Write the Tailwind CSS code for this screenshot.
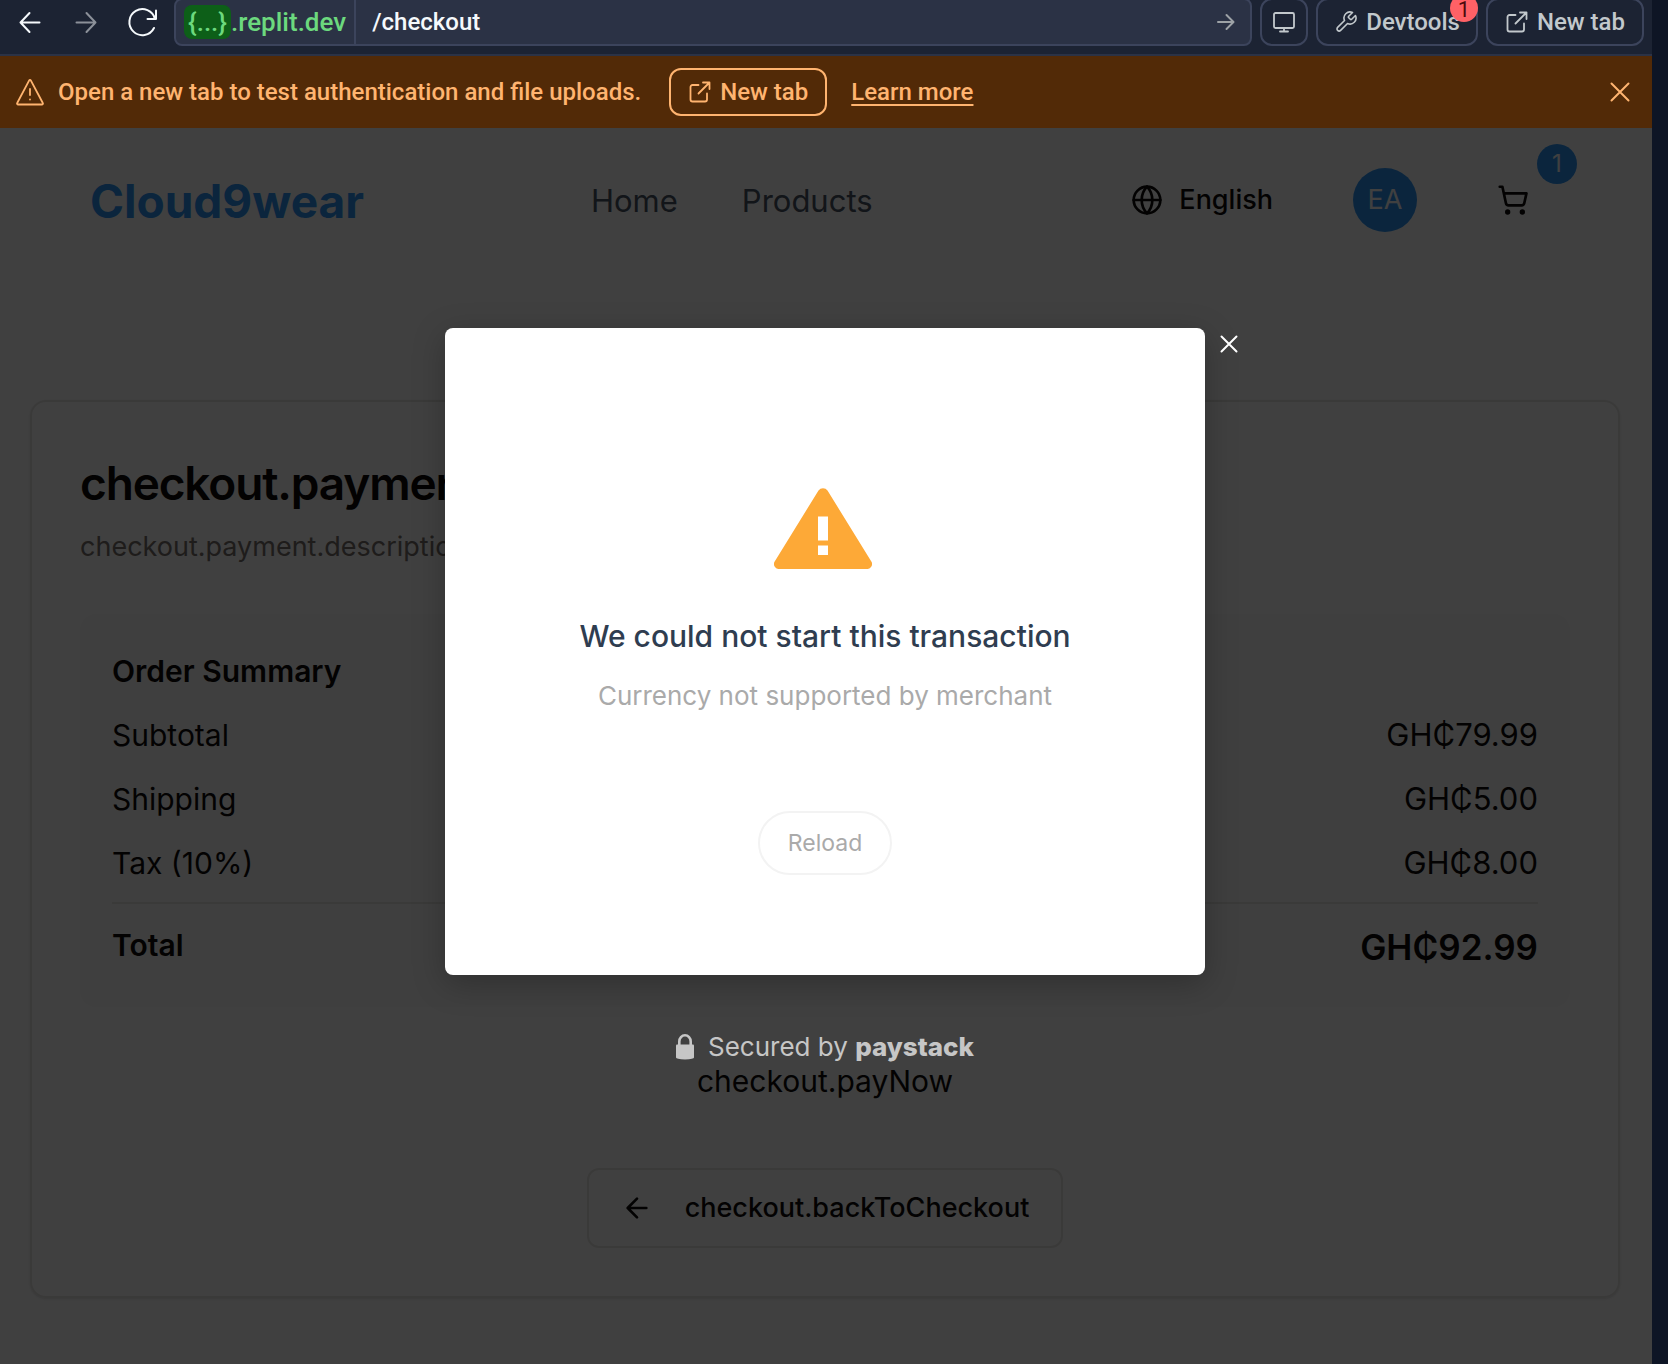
<!DOCTYPE html>
<html lang="en">
<head>
<meta charset="utf-8">
<meta name="viewport" content="width=device-width, initial-scale=1">
<title>Cloud9wear checkout</title>
<script src="https://cdn.jsdelivr.net/npm/@tailwindcss/browser@4"></script>
</head>
<body class="flex min-h-screen flex-col bg-[#0e1525] pr-4 font-['Inter',sans-serif]">

  <!-- Preview toolbar -->
  <div class="border-b-2 border-[#2b3245] bg-[#1c2333] pb-2 font-['Roboto',sans-serif] text-2xl font-medium text-[#c2c8cc]">
    <div class="-mt-0.5 flex h-12 items-stretch gap-2 pr-2 pl-0.5">
      <div class="-mr-1 flex">
        <button type="button" aria-label="Back" class="flex w-14 items-center justify-center text-[#f5f9fc]">
          <svg class="size-7" viewBox="0 0 28 28" fill="none" stroke="currentColor" stroke-width="2" stroke-linecap="round" stroke-linejoin="round"><path d="M23.500 14.500H4.500M13.500 5L4.500 14.500l9 9.500"/></svg>
        </button>
        <button type="button" aria-label="Forward" class="flex w-14 items-center justify-center text-[#8b9099]">
          <svg class="size-7" viewBox="0 0 28 28" fill="none" stroke="currentColor" stroke-width="2" stroke-linecap="round" stroke-linejoin="round"><path d="M4.500 14.500H23.500M14.500 5l9 9.500-9 9.500"/></svg>
        </button>
        <button type="button" aria-label="Refresh" class="flex w-14 items-center justify-center text-[#f5f9fc]">
          <svg class="size-8" viewBox="0 0 32 32" fill="none" stroke="currentColor" stroke-width="2" stroke-linecap="round" stroke-linejoin="round"><path d="M30 4.500v8.500H21.500M29 13A13 13 0 1 0 28 22"/></svg>
        </button>
      </div>
      <div class="flex min-w-0 flex-1 items-stretch rounded-lg border-2 border-[#3c445c] bg-[#2b3245]">
        <span class="flex items-center border-r-2 border-[#3c445c] px-2 text-[26px] text-[#6cd97e]"><span class="rounded-lg bg-[#0d5f18] px-1 leading-[34px]">{...}</span>.replit.dev</span>
        <input type="text" aria-label="Path" value="/checkout" class="min-w-0 flex-1 bg-transparent px-4 text-[#f5f9fc] outline-none">
        <button type="button" aria-label="Go" class="flex w-12 items-center justify-center text-[#9da2a6]">
          <svg class="size-5" viewBox="0 0 20 20" fill="none" stroke="currentColor" stroke-width="2" stroke-linecap="round" stroke-linejoin="round"><path d="M2 10h15M10.500 3l7 7-7 7"/></svg>
        </button>
      </div>
      <button type="button" aria-label="Device size" class="flex w-12 items-center justify-center rounded-xl border-2 border-[#3c445c]">
        <svg class="size-6" viewBox="0 0 24 24" fill="none" stroke="currentColor" stroke-width="1.800" stroke-linecap="round" stroke-linejoin="round"><rect x="2" y="3" width="20" height="15" rx="1.500"/><path d="M12 18v3.500M8 21.500h8"/></svg>
      </button>
      <button type="button" class="relative flex items-center gap-2 rounded-xl border-2 border-[#3c445c] px-4">
        <svg class="size-6" viewBox="0 0 24 24" fill="none" stroke="currentColor" stroke-width="1.600" stroke-linecap="round" stroke-linejoin="round"><path d="M14.700 6.300a1 1 0 0 0 0 1.400l1.600 1.600a1 1 0 0 0 1.400 0l3.770-3.770a6 6 0 0 1-7.940 7.940l-6.910 6.910a2.120 2.120 0 0 1-3-3l6.910-6.910a6 6 0 0 1 7.940-7.940z"/></svg>
        Devtools
        <span class="absolute -top-1.5 -right-0.5 flex size-7 items-center justify-center rounded-full bg-[#ff6166] pt-1 text-[22px] leading-5 font-normal text-[#4d0a0c]">1</span>
      </button>
      <button type="button" class="flex items-center gap-2 rounded-xl border-2 border-[#3c445c] px-[17px]">
        <svg class="size-6" viewBox="0 0 24 24" fill="none" stroke="currentColor" stroke-width="1.800" stroke-linecap="round" stroke-linejoin="round"><path d="M10.500 5H4.500A2 2 0 0 0 2.500 7v12.500a2 2 0 0 0 2 2H17a2 2 0 0 0 2-2V13.500M15 2.500h6.500V9M21.500 2.500L10.500 13.500"/></svg>
        New tab
      </button>
    </div>
  </div>

  <!-- Preview notice -->
  <div class="flex h-18 items-center bg-[#522a07] px-4 font-['Roboto',sans-serif] text-2xl font-medium text-[#ffb470]">
    <svg class="mr-3.5 size-7 shrink-0" viewBox="0 0 28 28" fill="none" stroke="currentColor" stroke-width="1.800" stroke-linecap="round" stroke-linejoin="round"><path d="M13.200 2.300L1.200 25a1 1 0 0 0 .9 1.500h23.800a1 1 0 0 0 .9-1.500L14.800 2.300a.9.900 0 0 0-1.600 0zM14 11v6M14 21.500v.1"/></svg>
    <p>Open a new tab to test authentication and file uploads.</p>
    <button type="button" class="ml-7 flex h-12 items-center gap-2 rounded-xl border-2 border-[#ffb470] px-[17px]">
      <svg class="size-6" viewBox="0 0 24 24" fill="none" stroke="currentColor" stroke-width="1.800" stroke-linecap="round" stroke-linejoin="round"><path d="M10.500 5H4.500A2 2 0 0 0 2.500 7v12.500a2 2 0 0 0 2 2H17a2 2 0 0 0 2-2V13.500M15 2.500h6.500V9M21.500 2.500L10.500 13.500"/></svg>
      New tab
    </button>
    <a href="#" class="ml-6 underline decoration-2 underline-offset-4">Learn more</a>
    <button type="button" aria-label="Dismiss" class="ml-auto flex size-8 items-center justify-center">
      <svg class="size-5" viewBox="0 0 20 20" fill="none" stroke="currentColor" stroke-width="2" stroke-linecap="round"><path d="M1.500 1.500l17 17M18.500 1.500l-17 17"/></svg>
    </button>
  </div>

  <!-- Store page -->
  <div class="relative flex-1 bg-white text-stone-950">
    <header class="flex h-36 items-center pr-[99px] pl-[90px]">
      <a href="#" class="pt-0.5 text-[46px] font-bold text-[#2c94f4]">Cloud9wear</a>
      <nav class="ml-[227px] flex gap-16 pt-0.5 text-[31px] text-gray-600">
        <a href="#">Home</a>
        <a href="#">Products</a>
      </nav>
      <div class="ml-auto flex items-center">
        <button type="button" class="flex items-center gap-4 text-[27px] font-medium">
          <svg class="size-8" viewBox="0 0 24 24" fill="none" stroke="currentColor" stroke-width="2" stroke-linecap="round" stroke-linejoin="round"><circle cx="12" cy="12" r="10"/><path d="M12 2a14.500 14.500 0 0 0 0 20 14.500 14.500 0 0 0 0-20M2 12h20"/></svg>
          English
        </button>
        <button type="button" aria-label="Account" class="ml-20 flex size-16 items-center justify-center rounded-full bg-[#2c94f4] text-[27px] text-white">EA</button>
        <button type="button" aria-label="Cart" class="relative ml-14 flex size-20 items-center justify-center">
          <svg class="size-8" viewBox="0 0 24 24" fill="none" stroke="currentColor" stroke-width="2" stroke-linecap="round" stroke-linejoin="round"><circle cx="8" cy="21" r="1"/><circle cx="19" cy="21" r="1"/><path d="M2.050 2.050h2l2.660 12.420a2 2 0 0 0 2 1.580h9.780a2 2 0 0 0 1.950-1.570l1.650-7.430H5.120"/></svg>
          <span class="absolute -top-4 -right-6 flex size-10 items-center justify-center rounded-full bg-[#2c94f4] text-2xl text-white">1</span>
        </button>
      </div>
    </header>

    <main class="pt-32 pr-8 pb-16 pl-[30px]">
      <section class="rounded-2xl border-2 border-stone-200 px-12 pt-[53px] pb-12 shadow-sm">
        <h1 class="text-[46px] leading-14 font-semibold tracking-tight">checkout.payment.title</h1>
        <p class="mt-4 text-[27px] leading-10 text-stone-500">checkout.payment.description</p>

        <div class="mt-[47px] rounded-2xl bg-[#fbfbfa] px-8 pt-[33px] pb-[34px] text-[30px] leading-12">
          <h2 class="font-semibold">Order Summary</h2>
          <dl>
            <div class="mt-4 flex justify-between"><dt>Subtotal</dt><dd class="text-[31px]">GH₵79.99</dd></div>
            <div class="mt-4 flex justify-between"><dt>Shipping</dt><dd class="text-[31px]">GH₵5.00</dd></div>
            <div class="mt-4 flex justify-between"><dt>Tax (10%)</dt><dd class="text-[31px]">GH₵8.00</dd></div>
            <div class="mt-[15px] flex justify-between border-t-2 border-stone-200 pt-[17px] font-semibold"><dt>Total</dt><dd class="text-[35px] leading-13">GH₵92.99</dd></div>
          </dl>
        </div>

        <button type="button" class="mx-auto mt-[50px] block text-[30px] leading-12">checkout.payNow</button>
        <button type="button" class="mx-auto mt-[63px] flex h-20 items-center gap-8 rounded-xl border-2 border-stone-200 px-8 text-[27px] font-medium">
          <svg class="size-8" viewBox="0 0 24 24" fill="none" stroke="currentColor" stroke-width="2" stroke-linecap="round" stroke-linejoin="round"><path d="M12 19l-7-7 7-7M19 12H5"/></svg>
          checkout.backToCheckout
        </button>
      </section>
    </main>

    <!-- Payment dialog over the dimmed page -->
    <div class="absolute inset-0 flex flex-col items-center bg-black/75 pt-50 pr-0.5">
      <div role="dialog" aria-modal="true" aria-labelledby="dialog-title" class="relative flex w-[760px] flex-col items-center rounded-lg bg-white pt-40 pb-25 text-center shadow-[0_8px_32px_rgba(0,0,0,0.25)]">
        <button type="button" aria-label="Close" class="absolute top-0 left-full flex h-8 w-12 items-center justify-center text-white">
          <svg class="size-5" viewBox="0 0 20 20" fill="none" stroke="currentColor" stroke-width="2" stroke-linecap="round"><path d="M2.500 2.500l15 15M17.500 2.500l-15 15"/></svg>
        </button>
        <svg class="mr-1 h-[81px] w-[98px]" viewBox="0 0 98 81"><path fill="#fda937" d="M44.500 2.500a5.500 5.500 0 0 1 9 0L97 73a5 5 0 0 1-4.500 8h-87A5 5 0 0 1 1 73z"/><path fill="#fff" d="M44 28.500h10v24H44zM44 57.500h10v9.500H44z"/></svg>
        <h2 id="dialog-title" class="mt-[45px] text-[30px] leading-11 font-medium text-[#2f3d50]">We could not start this transaction</h2>
        <p class="mt-[18px] text-[26px] leading-10 text-[#aaaaaa]">Currency not supported by merchant</p>
        <button type="button" class="mt-[95px] h-16 rounded-full border-2 border-[#f3f3f3] px-7 text-[23px] text-[#aaaaaa]">Reload</button>
      </div>
      <p class="mt-14 flex items-center text-[26px] leading-8 text-[#c6c6c6]">
        <svg class="mr-3.5 h-[26px] w-[18px]" viewBox="0 0 18 26"><path fill="none" stroke="currentColor" stroke-width="2.600" d="M3.300 12V7.500a5.700 6.200 0 0 1 11.400 0V12"/><path fill="currentColor" d="M0 11.500q0-1 1-1h16q1 0 1 1V23.500Q18 25 9 25.500 0 25 0 23.500z"/></svg>
        Secured by&nbsp;<span class="font-extrabold">paystack</span>
      </p>
    </div>
  </div>
</body>
</html>
